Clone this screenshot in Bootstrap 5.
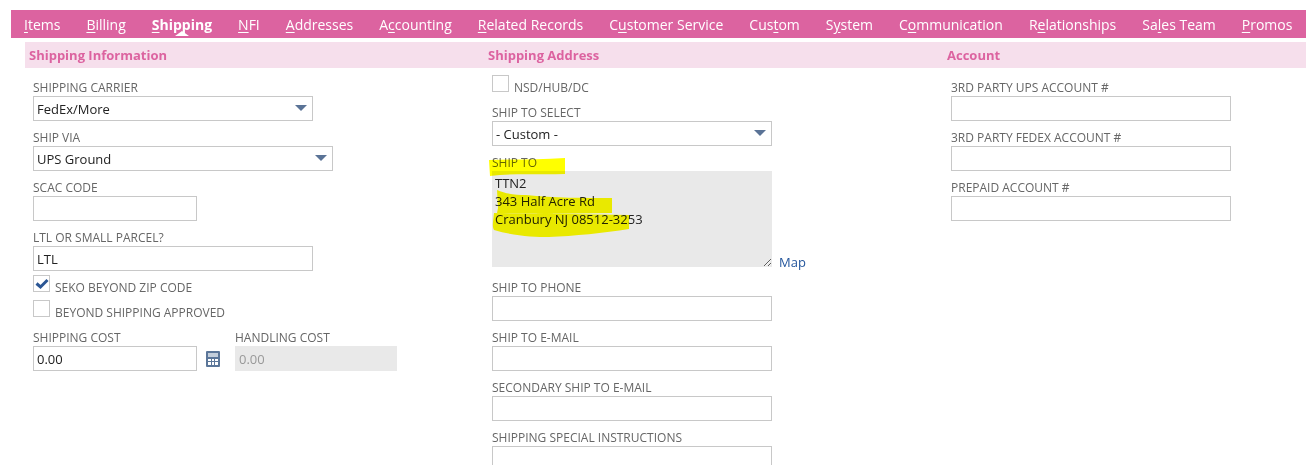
<!DOCTYPE html>
<html lang="en">
<head>
  <meta charset="UTF-8" />
  <title>Shipping</title>
  <meta name="viewport" content="width=device-width, initial-scale=1" />
  <link href="https://cdn.jsdelivr.net/npm/bootstrap@5.3.0/dist/css/bootstrap.min.css" rel="stylesheet" />
  <style>
    body {
      font-family: "Open Sans", "Liberation Sans", sans-serif;
      font-size: 13px;
      color: #222;
      background: #fff;
      height: 465px;
      overflow: hidden;
    }

    .tab-bar {
      margin: 10px 0 4px 11px;
      height: 28px;
      background: #dc63a0;
      flex-wrap: nowrap;
    }

    .tab-link {
      position: relative;
      padding: 0 13px;
      font-size: 14px;
      line-height: 30px;
      color: #fff;
      text-decoration: none;
      white-space: nowrap;
    }

    .tab-link u { text-underline-offset: 2px; }

    .tab-link.on { font-weight: 700; }

    .tab-link.on::after {
      content: "";
      position: absolute;
      left: 50%;
      bottom: 0;
      margin-left: -7px;
      border: 7px solid transparent;
      border-top: 0;
      border-bottom: 5px solid #fff;
      margin-bottom: 2px;
    }

    .section-bar {
      margin-left: 25px;
      height: 26px;
      background: #f6dfec;
    }

    .section-col { width: 459px; flex: none; }
    .section-col:last-child { flex: 1 1 0; width: auto; }

    .section-title {
      padding-left: 4px;
      font-size: 13px;
      font-weight: 700;
      line-height: 27px;
      color: #dc63a0;
    }

    .form-area { margin-left: 25px; padding-top: 10px; }

    .form-col {
      position: relative;
      width: 459px;
      flex: none;
      padding-left: 8px;
    }

    .form-col:last-child { flex: 1 1 0; width: auto; }

    .fld { margin-bottom: 7px; }
    .fld-tall { margin-bottom: 11px; }

    .fld-label {
      display: block;
      height: 18px;
      font-size: 12px;
      line-height: 19px;
      color: #666;
      text-transform: uppercase;
      white-space: nowrap;
    }

    .fld-input {
      display: block;
      height: 25px;
      width: 280px;
      padding: 0 3px;
      font-size: 13px;
      line-height: 23px;
      color: #222;
      border: 1px solid #c8c8c8;
      border-radius: 0;
      background-image: none;
    }

    select.fld-input { padding-top: 1px; }

    .fld-input:disabled { background: #e9e9e9; border-color: #e9e9e9; color: #999; opacity: 1; }

    .fld-area {
      height: 96px;
      padding: 3px;
      line-height: 18px;
      background: #e9e9e9;
      border: 0;
      resize: both;
    }

    .w-via { width: 300px; }
    .w-short { width: 164px; }
    .w-hand { width: 162px; }

    .sel-wrap { position: relative; width: 280px; }
    .sel-wrap.w-via { width: 300px; }
    .sel-wrap .fld-input { width: 100%; }

    .sel-wrap::after {
      content: "";
      position: absolute;
      right: 6px;
      top: 9px;
      border: 6.5px solid transparent;
      border-top: 6px solid #5a7396;
      border-bottom: 0;
    }

    .check-group { margin: -3px 0 3px; }
    .check-row { height: 25px; }

    .box-check {
      width: 17px;
      height: 17px;
      margin: 0;
      border: 1px solid #c8c8c8;
      background: #fff;
      flex: none;
    }

    .box-label {
      margin: 3px 0 0 5px;
      font-size: 12px;
      line-height: 19px;
      color: #666;
      white-space: nowrap;
    }

    .calc-icon { margin: 0 0 4px 9px; }
    .hand-gap { margin-left: 15px; }

    .map-link {
      position: absolute;
      left: 287px;
      bottom: -5px;
      font-size: 13px;
      color: #24569c;
      text-decoration: none;
    }

    .marker {
      position: absolute;
      left: 0;
      top: 0;
      pointer-events: none;
      mix-blend-mode: multiply;
    }
  </style>
</head>
<body>

  <nav class="nav tab-bar">
    <a class="tab-link" href="#"><u>I</u>tems</a>
    <a class="tab-link" href="#"><u>B</u>illing</a>
    <a class="tab-link on" href="#"><u>S</u>hipping</a>
    <a class="tab-link" href="#"><u>N</u>FI</a>
    <a class="tab-link" href="#"><u>A</u>ddresses</a>
    <a class="tab-link" href="#">A<u>c</u>counting</a>
    <a class="tab-link" href="#"><u>R</u>elated Records</a>
    <a class="tab-link" href="#">C<u>u</u>stomer Service</a>
    <a class="tab-link" href="#">Cus<u>t</u>om</a>
    <a class="tab-link" href="#">S<u>y</u>stem</a>
    <a class="tab-link" href="#">C<u>o</u>mmunication</a>
    <a class="tab-link" href="#">R<u>e</u>lationships</a>
    <a class="tab-link" href="#">Sa<u>l</u>es Team</a>
    <a class="tab-link" href="#"><u>P</u>romos</a>
  </nav>

  <div class="section-bar d-flex">
    <div class="section-col section-title">Shipping Information</div>
    <div class="section-col section-title">Shipping Address</div>
    <div class="section-col section-title">Account</div>
  </div>

  <div class="form-area d-flex">
    <!-- left column -->
    <div class="form-col">
      <div class="fld">
        <label class="fld-label">Shipping Carrier</label>
        <div class="sel-wrap">
          <select class="form-select fld-input"><option>FedEx/More</option></select>
        </div>
      </div>
      <div class="fld">
        <label class="fld-label">Ship Via</label>
        <div class="sel-wrap w-via">
          <select class="form-select fld-input"><option>UPS Ground</option></select>
        </div>
      </div>
      <div class="fld">
        <label class="fld-label">SCAC Code</label>
        <input class="form-control fld-input w-short" type="text" />
      </div>
      <div class="fld">
        <label class="fld-label">LTL or Small Parcel?</label>
        <input class="form-control fld-input" type="text" value="LTL" />
      </div>
      <div class="check-group">
        <div class="d-flex check-row">
          <span class="box-check d-flex">
            <svg width="15" height="15" viewBox="0 0 15 15"><path d="M2.500 7.500 6.500 11 13.500 4" fill="none" stroke="#2b5694" stroke-width="3"/></svg>
          </span>
          <span class="box-label">SEKO BEYOND ZIP CODE</span>
        </div>
        <div class="d-flex check-row">
          <span class="box-check"></span>
          <span class="box-label">BEYOND SHIPPING APPROVED</span>
        </div>
      </div>
      <div class="d-flex">
        <div>
          <label class="fld-label">Shipping Cost</label>
          <input class="form-control fld-input w-short" type="text" value="0.00" />
        </div>
        <svg class="calc-icon align-self-end" width="14" height="16" viewBox="0 0 14 16">
          <rect width="14" height="16" rx="1" fill="#5b7699"/>
          <rect x="2" y="2" width="10" height="4" fill="#c3cedb"/>
          <path d="M2 8h3v2H2zM6 8h2v2H6zM9 8h3v2H9zM2 11h3v3H2zM6 11h2v3H6zM9 11h3v3H9z" fill="#fff"/>
        </svg>
        <div class="hand-gap">
          <label class="fld-label">Handling Cost</label>
          <input class="form-control fld-input w-hand" type="text" value="0.00" disabled />
        </div>
      </div>
    </div>

    <!-- middle column -->
    <div class="form-col">
      <div class="check-group">
        <div class="d-flex check-row">
          <span class="box-check"></span>
          <span class="box-label">NSD/HUB/DC</span>
        </div>
      </div>
      <div class="fld">
        <label class="fld-label">Ship To Select</label>
        <div class="sel-wrap">
          <select class="form-select fld-input"><option>- Custom -</option></select>
        </div>
      </div>
      <div class="fld fld-tall position-relative">
        <label class="fld-label">Ship To</label>
        <textarea class="form-control fld-input fld-area">TTN2
343 Half Acre Rd
Cranbury NJ 08512-3253</textarea>
        <a class="map-link" href="#">Map</a>
      </div>
      <div class="fld">
        <label class="fld-label">Ship To Phone</label>
        <input class="form-control fld-input" type="text" />
      </div>
      <div class="fld">
        <label class="fld-label">Ship To E-mail</label>
        <input class="form-control fld-input" type="text" />
      </div>
      <div class="fld">
        <label class="fld-label">Secondary Ship To E-mail</label>
        <input class="form-control fld-input" type="text" />
      </div>
      <div class="fld">
        <label class="fld-label">Shipping Special Instructions</label>
        <input class="form-control fld-input" type="text" />
      </div>
      <!-- highlighter scribbles -->
      <svg class="marker" width="180" height="180" viewBox="0 0 180 180">
        <path d="M5 82 C30 81 55 82 81 80 L81 96 C55 97 30 95 6 98Z" fill="#ff0"/>
        <path d="M13 112 C22 116 32 117 42 117 C70 120 100 120 128 120 L128 135 C90 135 50 137 10 135 C9 145 8 148 10 152 C30 158 50 159 65 159 C90 158 120 155 145 151 L145 137 C100 136 50 136 13 135 L14 130Z" fill="#ff0"/>
      </svg>
    </div>

    <!-- right column -->
    <div class="form-col">
      <div class="fld">
        <label class="fld-label">3rd Party UPS Account #</label>
        <input class="form-control fld-input" type="text" />
      </div>
      <div class="fld">
        <label class="fld-label">3rd Party FedEx Account #</label>
        <input class="form-control fld-input" type="text" />
      </div>
      <div class="fld">
        <label class="fld-label">Prepaid Account #</label>
        <input class="form-control fld-input" type="text" />
      </div>
    </div>
  </div>

  <script src="https://cdn.jsdelivr.net/npm/bootstrap@5.3.0/dist/js/bootstrap.bundle.min.js"></script>
</body>
</html>
